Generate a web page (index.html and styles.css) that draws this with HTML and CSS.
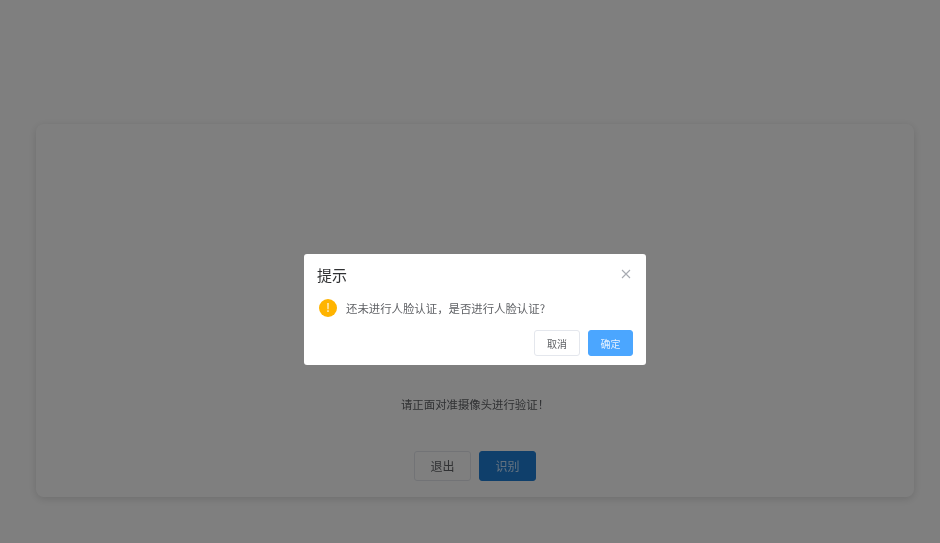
FILE: index.html
```html
<!DOCTYPE html>
<html lang="zh-CN">
<head>
<meta charset="utf-8">
<title>人脸认证</title>
<link rel="stylesheet" href="styles.css">
</head>
<body>
<main class="page">
  <section class="card">
    <p class="hint">请正面对准摄像头进行验证！</p>
    <div class="card-actions">
      <button class="btn btn-plain">退出</button>
      <button class="btn btn-primary">识别</button>
    </div>
  </section>
</main>
<div class="overlay">
  <div class="dialog">
    <div class="dialog-head">
      <span class="dialog-title">提示</span>
      <svg class="close" viewBox="0 0 12 12" width="12" height="12"><path d="M2 2l8 8M10 2l-8 8" stroke="#a8abb2" stroke-width="1.1" fill="none"/></svg>
    </div>
    <div class="dialog-body">
      <span class="warn">!</span>
      <span class="message">还未进行人脸认证，是否进行人脸认证?</span>
    </div>
    <div class="dialog-foot">
      <button class="dbtn dbtn-plain">取消</button>
      <button class="dbtn dbtn-primary">确定</button>
    </div>
  </div>
</div>
</body>
</html>
```
FILE: styles.css
```css
* { box-sizing: border-box; }
html, body { margin: 0; height: 100%; }
body {
  background: #fff;
  font-family: "Noto Sans CJK SC", "Liberation Sans", sans-serif;
  overflow: hidden;
  filter: blur(0.7px);
}
.page { height: 543px; padding: 124px 26px 46px 36px; }
.card {
  height: 373px;
  background: #fff;
  border-radius: 8px;
  box-shadow: 0 2px 8px rgba(0,0,0,.14);
  display: flex;
  flex-direction: column;
  align-items: center;
  padding-top: 270px;
}
.hint { margin: 0; font-size: 11.4px; line-height: 20px; color: #606266; }
.card-actions { display: flex; gap: 8px; margin-top: 37px; }
.btn { width: 57px; height: 30px; border-radius: 3px; font: inherit; font-size: 12px; line-height: 26px; padding: 0; }
.btn-plain { background: #fff; border: 1px solid #e4e7ed; color: #606266; }
.btn-primary { background: #1f7fd6; border: 1px solid #1f7fd6; color: #c6e2ff; }
.overlay {
  position: fixed;
  inset: 0;
  background: rgba(0,0,0,.5);
  display: flex;
  justify-content: center;
  align-items: flex-start;
  padding: 254px 0 0 10px;
}
.dialog {
  width: 342px;
  height: 111px;
  background: #fff;
  border-radius: 3px;
  padding: 10px 13px 9px 13px;
  display: flex;
  flex-direction: column;
}
.dialog-head { display: flex; justify-content: space-between; align-items: center; height: 21px; }
.dialog-title { font-size: 15px; line-height: 22px; color: #303133; }
.close { margin-right: 1px; margin-top: -1px; }
.dialog-body { display: flex; align-items: center; gap: 9px; margin-top: 13px; margin-left: 2px; height: 20px; }
.warn {
  width: 18px; height: 18px; border-radius: 50%;
  background: #ffb400; color: #ffe9b0;
  font-size: 12px; font-weight: 700; line-height: 18px; text-align: center;
  font-family: "Liberation Sans", sans-serif;
}
.message { font-size: 11.4px; line-height: 20px; color: #606266; }
.dialog-foot { display: flex; justify-content: flex-end; gap: 8px; margin-top: auto; }
.dbtn { width: 46px; height: 26px; border-radius: 3px; font: inherit; font-size: 10px; padding: 0; }
.dbtn-plain { background: #fff; border: 1px solid #e4e7ed; color: #606266; }
.dbtn-primary { width: 45px; background: #4ba6ff; border: 1px solid #4ba6ff; color: #e6f2ff; }
```
